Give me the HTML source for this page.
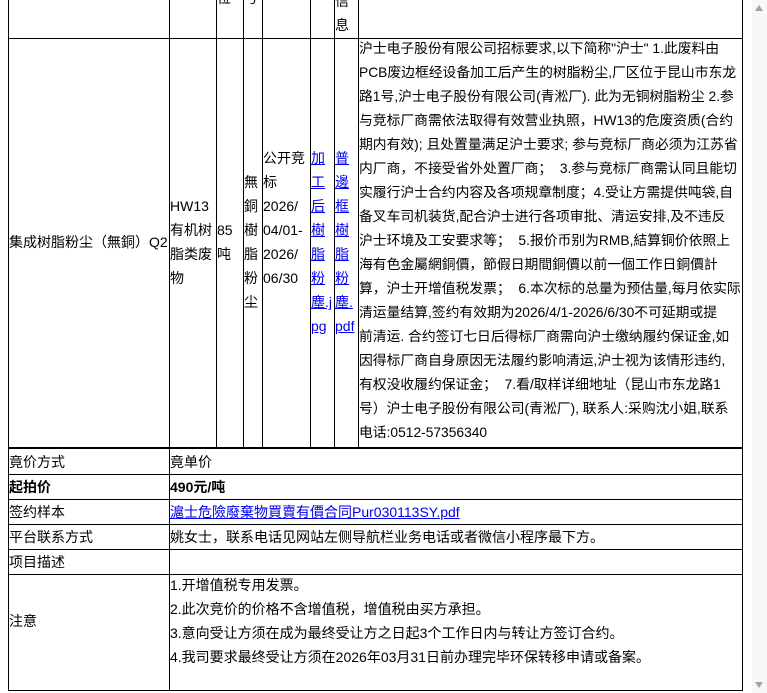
<!DOCTYPE html>
<html><head><meta charset="utf-8"><style>
html,body{margin:0;padding:0;width:767px;height:693px;overflow:hidden;background:#fff;position:relative;font-family:"Liberation Sans","Noto Sans CJK SC",sans-serif;font-size:14px;color:#000}
.v{position:absolute;width:1px;background:#000}
.h{position:absolute;height:1px;background:#000}
.t{position:absolute;line-height:24px;white-space:nowrap}
a{color:#00e;text-decoration:underline}
.b{font-weight:bold}
#sb{position:absolute;left:752px;top:0;width:15px;height:693px;background:#f8f8f8}
#th{position:absolute;left:755px;top:318px;width:9px;height:364px;background:#a8a8a8;border-radius:5px}
</style></head><body>
<div class="v" style="left:8px;top:0;height:691px"></div>
<div class="v" style="left:169px;top:0;height:691px"></div>
<div class="v" style="left:216px;top:0;height:447px"></div>
<div class="v" style="left:243px;top:0;height:447px"></div>
<div class="v" style="left:262px;top:0;height:447px"></div>
<div class="v" style="left:310px;top:0;height:447px"></div>
<div class="v" style="left:334px;top:0;height:447px"></div>
<div class="v" style="left:358px;top:0;height:447px"></div>
<div class="v" style="left:742px;top:0;height:691px"></div>
<div class="h" style="left:8px;top:38px;width:735px"></div>
<div class="h" style="left:8px;top:447px;width:735px;height:2px"></div>
<div class="h" style="left:8px;top:474px;width:735px"></div>
<div class="h" style="left:8px;top:499px;width:735px"></div>
<div class="h" style="left:8px;top:524px;width:735px"></div>
<div class="h" style="left:8px;top:549px;width:735px"></div>
<div class="h" style="left:8px;top:574px;width:735px"></div>
<div class="h" style="left:8px;top:690px;width:735px"></div>

<div class="t" style="left:217px;top:-14px">位</div>
<div class="t" style="left:244px;top:-14px">号</div>
<div class="t" style="left:335px;top:-11px">信</div>
<div class="t" style="left:335px;top:13px">息</div>

<div class="t" style="left:9px;top:230px;width:160px;overflow:hidden">集成树脂粉尘（無銅）Q2</div>
<div class="t" style="left:170px;top:194px">HW13<br>有机树<br>脂类废<br>物</div>
<div class="t" style="left:217px;top:218px">85<br>吨</div>
<div class="t" style="left:244px;top:170px">無<br>銅<br>樹<br>脂<br>粉<br>尘</div>
<div class="t" style="left:263px;top:146px">公开竞<br>标<br>2026/<br>04/01-<br>2026/<br>06/30</div>
<div class="t" style="left:311px;top:146px"><a>加<br>工<br>后<br>樹<br>脂<br>粉<br>塵.j<br>pg</a></div>
<div class="t" style="left:335px;top:146px"><a>普<br>邊<br>框<br>樹<br>脂<br>粉<br>塵.<br>pdf</a></div>
<div class="t" style="left:359px;top:37px;font-size:13.8px">沪士电子股份有限公司招标要求,以下简称"沪士" 1.此废料由<br>PCB废边框经设备加工后产生的树脂粉尘,厂区位于昆山市东龙<br>路1号,沪士电子股份有限公司(青淞厂). 此为无铜树脂粉尘 2.参<br>与竞标厂商需依法取得有效营业执照，HW13的危废资质(合约<br>期内有效); 且处置量满足沪士要求; 参与竞标厂商必须为江苏省<br>内厂商，不接受省外处置厂商；&nbsp; 3.参与竞标厂商需认同且能切<br>实履行沪士合约内容及各项规章制度；4.受让方需提供吨袋,自<br>备叉车司机装货,配合沪士进行各项审批、清运安排,及不违反<br>沪士环境及工安要求等；&nbsp; 5.报价币别为RMB,結算铜价依照上<br>海有色金屬網銅價，節假日期間銅價以前一個工作日銅價計<br>算，沪士开增值税发票；&nbsp; 6.本次标的总量为预估量,每月依实际<br>清运量结算,签约有效期为2026/4/1-2026/6/30不可延期或提<br>前清运. 合约签订七日后得标厂商需向沪士缴纳履约保证金,如<br>因得标厂商自身原因无法履约影响清运,沪士视为该情形违约,<br>有权没收履约保证金；&nbsp; 7.看/取样详细地址（昆山市东龙路1<br>号）沪士电子股份有限公司(青淞厂), 联系人:采购沈小姐,联系<br>电话:0512-57356340</div>

<div class="t" style="left:9px;top:450px">竟价方式</div>
<div class="t" style="left:170px;top:450px">竟单价</div>
<div class="t b" style="left:9px;top:475px">起拍价</div>
<div class="t b" style="left:170px;top:475px">490元/吨</div>
<div class="t" style="left:9px;top:500px">签约样本</div>
<div class="t" style="left:170px;top:500px"><a>滬士危險廢棄物買賣有價合同Pur030113SY.pdf</a></div>
<div class="t" style="left:9px;top:525px">平台联系方式</div>
<div class="t" style="left:170px;top:525px">姚女士，联系电话见网站左侧导航栏业务电话或者微信小程序最下方。</div>
<div class="t" style="left:9px;top:550px">项目描述</div>
<div class="t" style="left:9px;top:609px">注意</div>
<div class="t" style="left:170px;top:573px">1.开增值税专用发票。<br>2.此次竞价的价格不含增值税，增值税由买方承担。<br>3.意向受让方须在成为最终受让方之日起3个工作日内与转让方签订合约。<br>4.我司要求最终受让方须在2026年03月31日前办理完毕环保转移申请或备案。</div>

<div id="sb"><div id="th"></div>
<div style="position:absolute;left:3px;top:5px;width:0;height:0;border-left:4.5px solid transparent;border-right:4.5px solid transparent;border-bottom:6px solid #a3a3a3"></div>
<div style="position:absolute;left:3px;top:682px;width:0;height:0;border-left:4.5px solid transparent;border-right:4.5px solid transparent;border-top:6px solid #a3a3a3"></div>
</div>
</body></html>
